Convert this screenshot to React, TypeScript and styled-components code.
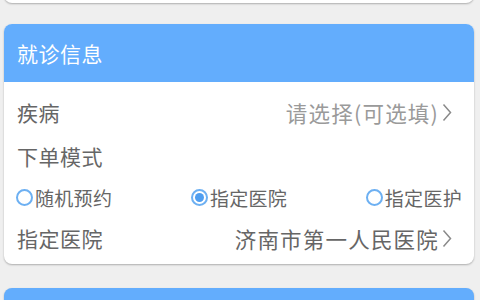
import React from "react";
import styled, { createGlobalStyle } from "styled-components";

const Global = createGlobalStyle`
  html, body { margin: 0; padding: 0; background: #efefef; }
  body {
    width: 480px; height: 300px; overflow: hidden;
    font-family: "Noto Sans CJK SC", "Noto Sans", sans-serif;
  }
`;

const Page = styled.div`
  display: flex;
  flex-direction: column;
  padding: 0 6px 0 4px;
  margin-top: -40px;
`;

const Card = styled.div<{ $gap?: number }>`
  background: #fff;
  border-radius: 8px;
  box-shadow: 0 1px 2px rgba(0, 0, 0, 0.28);
  overflow: hidden;
  margin-top: ${(p) => p.$gap ?? 0}px;
`;

const StubCard = styled(Card)`
  height: 43px;
`;

const Header = styled.div`
  height: 58px;
  background: #63adfd;
  display: flex;
  align-items: center;
  padding-left: 13px;
  color: #fff;
  font-size: 21px;
  letter-spacing: 0.5px;
`;

const Body = styled.div`
  display: flex;
  flex-direction: column;
  padding: 8px 0 4px;
`;

const Row = styled.div<{ $h?: number }>`
  height: ${(p) => p.$h ?? 44}px;
  display: flex;
  align-items: center;
  justify-content: space-between;
  padding: 0 22px 0 13px;
  font-size: 21px;
  color: #666;
`;

const Label = styled.span`
  letter-spacing: 0.5px;
`;

const Value = styled.span<{ $muted?: boolean }>`
  display: flex;
  align-items: center;
  gap: 3px;
  color: ${(p) => (p.$muted ? "#9a9a9a" : "#666")};
  font-size: 21.5px;
  letter-spacing: 1.2px;
`;

const RadioRow = styled.div`
  height: 38px;
  display: flex;
  align-items: center;
  justify-content: space-between;
  padding: 0 12px 0 12px;
  font-size: 19px;
  color: #666;
  letter-spacing: 0.3px;
`;

const RadioItem = styled.label`
  display: flex;
  align-items: center;
  gap: 2px;
`;

const Circle = styled.span<{ $on?: boolean }>`
  width: 17px;
  height: 17px;
  box-sizing: border-box;
  border-radius: 50%;
  border: 2px solid #6db0f2;
  display: flex;
  align-items: center;
  justify-content: center;
  &::after {
    content: "";
    width: 9px;
    height: 9px;
    border-radius: 50%;
    background: #4f9ef0;
    display: ${(p) => (p.$on ? "block" : "none")};
  }
`;

const NextCard = styled(Card)`
  height: 40px;
  background: #63adfd;
`;

const Chevron = () => (
  <svg width="10" height="19" viewBox="0 0 10 19">
    <polyline points="1.5,1.5 8.5,9.5 1.5,17.5" fill="none" stroke="#8a8a8a" strokeWidth="1.5" />
  </svg>
);

export default function App() {
  return (
    <>
      <Global />
      <Page>
        <StubCard />
        <Card $gap={21}>
          <Header>就诊信息</Header>
          <Body>
            <Row>
              <Label>疾病</Label>
              <Value $muted>
                请选择(可选填)
                <Chevron />
              </Value>
            </Row>
            <Row>
              <Label>下单模式</Label>
            </Row>
            <RadioRow>
              <RadioItem>
                <Circle />
                随机预约
              </RadioItem>
              <RadioItem>
                <Circle $on />
                指定医院
              </RadioItem>
              <RadioItem>
                <Circle />
                指定医护
              </RadioItem>
            </RadioRow>
            <Row>
              <Label>指定医院</Label>
              <Value>
                济南市第一人民医院
                <Chevron />
              </Value>
            </Row>
          </Body>
        </Card>
        <NextCard $gap={24} />
      </Page>
    </>
  );
}
